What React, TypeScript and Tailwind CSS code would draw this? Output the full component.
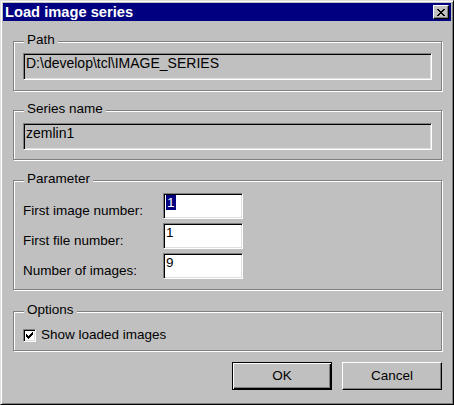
import React from 'react'

const font = { fontFamily: '"Liberation Sans", Arial, sans-serif' }

function Group({ label, className, children }: { label: string; className: string; children: React.ReactNode }) {
  return (
    <div className={`relative border border-[#808080] shadow-[inset_1px_1px_#fff,1px_1px_#fff] ${className}`}>
      <span className="absolute -top-[10px] left-[10px] bg-[#c0c0c0] px-[3px] leading-[16px]">{label}</span>
      {children}
    </div>
  )
}

function Field({ value, white, className = '' }: { value: React.ReactNode; white?: boolean; className?: string }) {
  return (
    <div
      className={`flex h-[26px] items-start border border-t-[#808080] border-l-[#808080] border-b-white border-r-white pl-[2px] leading-[16px] shadow-[inset_1px_1px_#000,inset_-1px_-1px_#dfdfdf] ${white ? 'bg-white' : 'bg-[#c0c0c0]'} ${className}`}
    >
      <span className="pt-[1px]">{value}</span>
    </div>
  )
}

function Row({ label, children }: { label: string; children: React.ReactNode }) {
  return (
    <div className="flex items-end">
      <span className="w-[140px] leading-[16px]">{label}</span>
      {children}
    </div>
  )
}

export default function App() {
  return (
    <div
      style={font}
      className="flex h-[405px] w-[454px] flex-col border border-t-[#dfdfdf] border-l-[#dfdfdf] border-b-black border-r-black bg-[#c0c0c0] p-[2px] text-[13.5px] text-black shadow-[inset_1px_1px_#fff,inset_-1px_-1px_#808080]"
    >
      <div className="flex h-[18px] items-center justify-between bg-[#000080] pl-[2px] pr-[2px]">
        <span className="text-[14.7px] font-bold leading-[18px] text-white">Load image series</span>
        <button className="flex h-[14px] w-[16px] items-center justify-center border border-t-white border-l-white border-b-black border-r-black bg-[#c0c0c0] shadow-[inset_-1px_-1px_#808080]">
          <svg width="8" height="7" viewBox="0 0 8 7" shapeRendering="crispEdges">
            <path d="M0 0h2v1h-2zM6 0h2v1h-2zM1 1h2v1h-2zM5 1h2v1h-2zM2 2h4v1h-4zM3 3h2v1h-2zM2 4h4v1h-4zM1 5h2v1h-2zM5 5h2v1h-2zM0 6h2v1h-2zM6 6h2v1h-2z" fill="#000" />
          </svg>
        </button>
      </div>

      <div className="flex flex-col pl-[10px] pr-[9px] pt-[20px]">
        <Group label="Path" className="h-[50px] px-[9px] pt-[11px]">
          <Field value="D:\develop\tcl\IMAGE_SERIES" className="h-[27px] text-[14px]" />
        </Group>

        <Group label="Series name" className="mt-[19px] h-[50px] px-[9px] pt-[12px]">
          <Field value="zemlin1" className="h-[27px] text-[14px]" />
        </Group>

        <Group label="Parameter" className="mt-[20px] flex h-[110px] flex-col gap-[4px] px-[9px] pt-[12px]">
          <Row label="First image number:">
            <Field
              white
              className="w-[80px]"
              value={<span className="bg-[#000080] px-[1px] text-white">1</span>}
            />
          </Row>
          <Row label="First file number:">
            <Field white className="w-[80px]" value="1" />
          </Row>
          <Row label="Number of images:">
            <Field white className="w-[80px]" value="9" />
          </Row>
        </Group>

        <Group label="Options" className="mt-[21px] h-[40px] px-[9px] pt-[15px]">
          <label className="flex items-center gap-[5px] leading-[16px]">
            <span className="flex h-[13px] w-[13px] items-center justify-center border border-t-[#808080] border-l-[#808080] border-b-white border-r-white bg-white shadow-[inset_1px_1px_#000,inset_-1px_-1px_#dfdfdf]">
              <svg width="7" height="7" viewBox="0 0 7 7" shapeRendering="crispEdges">
                <path d="M6 0h1v3h-1zM5 1h1v3h-1zM4 2h1v3h-1zM3 3h1v3h-1zM2 4h1v3h-1zM1 3h1v3h-1zM0 2h1v3h-1z" fill="#000" />
              </svg>
            </span>
            <span>Show loaded images</span>
          </label>
        </Group>

        <div className="mt-[11px] flex justify-end gap-[10px]">
          <button className="h-[28px] w-[100px] border border-black bg-[#c0c0c0] leading-[16px] shadow-[inset_1px_1px_#fff,inset_-1px_-1px_#000,inset_-2px_-2px_#808080]">
            OK
          </button>
          <button className="h-[28px] w-[100px] border border-t-white border-l-white border-b-black border-r-black bg-[#c0c0c0] leading-[16px] shadow-[inset_-1px_-1px_#808080]">
            Cancel
          </button>
        </div>
      </div>
    </div>
  )
}
